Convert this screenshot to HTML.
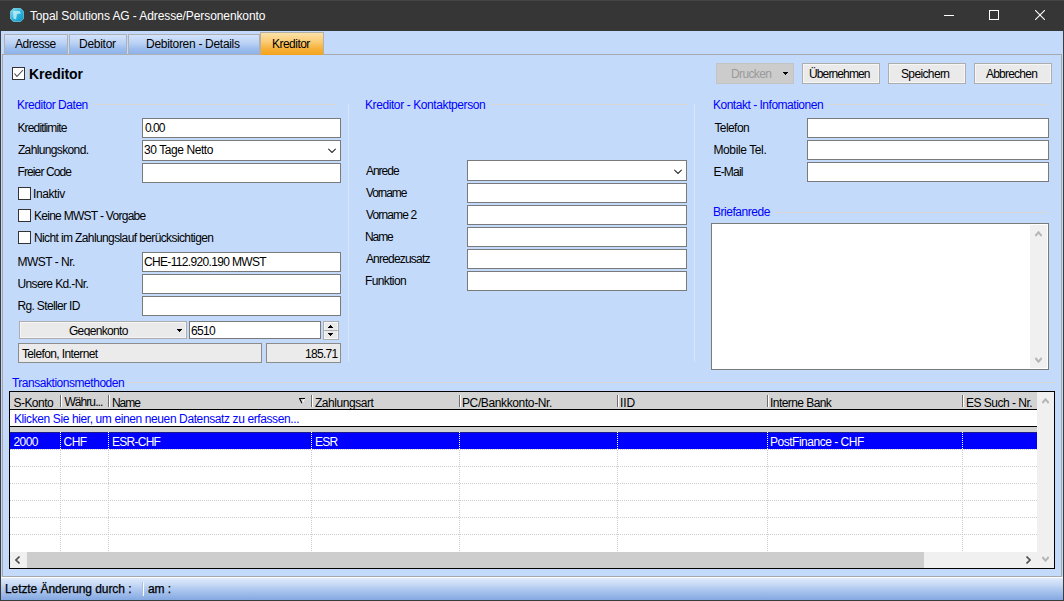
<!DOCTYPE html>
<html lang="de">
<head>
<meta charset="utf-8">
<title>Topal Solutions AG - Adresse/Personenkonto</title>
<style>
*{box-sizing:border-box;margin:0;padding:0}
html,body{width:1064px;height:601px;overflow:hidden;background:#c4dafa}
body{font-family:"Liberation Sans",sans-serif;font-size:12px;color:#000}
#win{position:absolute;left:0;top:0;width:1064px;height:601px;background:#c4dafa;overflow:hidden}
#win>div,#win>svg,#win>span{position:absolute}
.t{white-space:nowrap;display:block}
.hd{height:1px;background-image:linear-gradient(90deg,#cdcdcd 50%,transparent 50%);background-size:2px 1px}
.vd{width:1px;background-image:linear-gradient(180deg,#cdcdcd 50%,transparent 50%);background-size:1px 2px}
.vdw{width:1px;background-image:linear-gradient(180deg,#fff 50%,transparent 50%);background-size:1px 2px}
</style>
</head>
<body>
<div id="win">
<div style="left:0px;top:0px;width:1064px;height:31px;background:#363636"></div>
<div style="left:0px;top:0px;width:1064px;height:1px;background:#444"></div>
<svg style="left:10px;top:8px" width="14" height="14" viewBox="0 0 14 14"><defs><linearGradient id="ig" x1="0" y1="0" x2="1" y2="1"><stop offset="0" stop-color="#7fe0f5"/><stop offset="0.5" stop-color="#2fb4dc"/><stop offset="1" stop-color="#0b93c6"/></linearGradient></defs><path d="M3.5 0.3h7l3.2 3.2v7l-3.2 3.2h-7l-3.2-3.2v-7z" fill="url(#ig)" stroke="#8fe3f3" stroke-width="0.6"/><path d="M3 3h6.5l1.5 2.5-4 0.5-1 5.5-2.5-1z" fill="#d8f6fc" opacity="0.7"/></svg>
<svg style="left:944px;top:15px" width="10" height="1"><rect width="10" height="1" fill="#fff"/></svg>
<svg style="left:989px;top:10px" width="10" height="10"><rect x="0.5" y="0.5" width="9" height="9" fill="none" stroke="#fff" stroke-width="1"/></svg>
<svg style="left:1035px;top:10px" width="10" height="10"><path d="M0 0L10 10M10 0L0 10" stroke="#fff" stroke-width="1.1" fill="none"/></svg>
<div style="left:0px;top:31px;width:1px;height:570px;background:#3c3c3c"></div>
<div style="left:1063px;top:31px;width:1px;height:570px;background:#3c3c3c"></div>
<div style="left:0px;top:600px;width:1064px;height:1px;background:#3c3c3c"></div>
<div style="left:2px;top:54px;width:1060px;height:523px;border:1px solid #a6a8ae;background:#c4dafa"></div>
<div style="left:4px;top:34px;width:64px;height:21px;border:1px solid #aeb0b6;background:linear-gradient(#d3e3fb 0%,#bcd3f5 40%,#9fbfee 70%,#8db3ea 100%)"></div>
<div style="left:69px;top:34px;width:58px;height:21px;border:1px solid #aeb0b6;background:linear-gradient(#d3e3fb 0%,#bcd3f5 40%,#9fbfee 70%,#8db3ea 100%)"></div>
<div style="left:128px;top:34px;width:132px;height:21px;border:1px solid #aeb0b6;background:linear-gradient(#d3e3fb 0%,#bcd3f5 40%,#9fbfee 70%,#8db3ea 100%)"></div>
<div style="left:260px;top:32px;width:64px;height:23px;border:1px solid #b3b0a8;border-bottom:none;background:linear-gradient(#fbe2a8 0%,#facb74 40%,#f7b23c 70%,#f5a21a 100%)"></div>
<div style="left:12px;top:67px;width:13px;height:13px;background:#fff;border:1px solid #333"></div>
<svg style="left:12px;top:67px" width="13" height="13"><path d="M2.5 6.5L5 9.5L11 3" stroke="#444" stroke-width="1.1" fill="none"/></svg>
<div style="left:716px;top:63px;width:78px;height:21px;background:#cccccc;border:1px solid #c3c3c3"></div>
<svg style="left:783px;top:72px" width="5" height="3"><path d="M0 0h5v1h-1v1h-1v1h-1v-1h-1v-1h-1z" fill="#000"/></svg>
<div style="left:802px;top:63px;width:78px;height:21px;background:#eaeaea;border:1px solid #adadad;box-shadow:inset 0 0 0 1px #f6f6f6"></div>
<div style="left:888px;top:63px;width:78px;height:21px;background:#eaeaea;border:1px solid #adadad;box-shadow:inset 0 0 0 1px #f6f6f6"></div>
<div style="left:974px;top:63px;width:78px;height:21px;background:#eaeaea;border:1px solid #adadad;box-shadow:inset 0 0 0 1px #f6f6f6"></div>
<div style="left:94px;top:104px;width:242px;height:1px;background:#d8d7d3"></div>
<div style="left:348px;top:104px;width:1px;height:258px;background:#d9e4f4"></div>
<div style="left:142px;top:118px;width:199px;height:20px;background:#fff;border:1px solid #7a7a7a"></div>
<div style="left:142px;top:140px;width:199px;height:21px;background:#fff;border:1px solid #7a7a7a"></div>
<svg style="left:328px;top:148px" width="8" height="5"><path d="M0.3 0.8L4 4.5L7.7 0.8" stroke="#262626" stroke-width="1.1" fill="none"/></svg>
<div style="left:142px;top:163px;width:199px;height:20px;background:#fff;border:1px solid #7a7a7a"></div>
<div style="left:18px;top:187px;width:13px;height:13px;background:#fff;border:1px solid #333"></div>
<div style="left:18px;top:209px;width:13px;height:13px;background:#fff;border:1px solid #333"></div>
<div style="left:18px;top:231px;width:13px;height:13px;background:#fff;border:1px solid #333"></div>
<div style="left:142px;top:252px;width:199px;height:20px;background:#fff;border:1px solid #7a7a7a"></div>
<div style="left:142px;top:274px;width:199px;height:20px;background:#fff;border:1px solid #7a7a7a"></div>
<div style="left:142px;top:296px;width:199px;height:20px;background:#fff;border:1px solid #7a7a7a"></div>
<div style="left:19px;top:321px;width:168px;height:18px;background:#eaeaea;border:1px solid #adadad;box-shadow:inset 0 0 0 1px #f6f6f6"></div>
<div style="left:21px;top:336px;width:164px;height:1px;background:#eaeaea;z-index:2"></div>
<div style="left:20px;top:337px;width:166px;height:1px;background:#f6f6f6;z-index:2"></div>
<svg style="left:177px;top:329px" width="5" height="3"><path d="M0 0h5v1h-1v1h-1v1h-1v-1h-1v-1h-1z" fill="#000"/></svg>
<div style="left:189px;top:321px;width:132px;height:18px;background:#fff;border:1px solid #7a7a7a"></div>
<div style="left:323px;top:321px;width:16px;height:19px;background:#e9e9e9;border:1px solid #adadad;box-shadow:inset 0 0 0 1px #f6f6f6"></div>
<div style="left:324px;top:330px;width:14px;height:1px;background:#adadad"></div>
<svg style="left:328px;top:325px" width="5" height="3"><path d="M0 3h5v-1h-1v-1h-1v-1h-1v1h-1v1h-1z" fill="#000"/></svg>
<svg style="left:328px;top:333px" width="5" height="3"><path d="M0 0h5v1h-1v1h-1v1h-1v-1h-1v-1h-1z" fill="#000"/></svg>
<div style="left:18px;top:343px;width:244px;height:20px;background:#ebebeb;border:1px solid #8c8c8c"></div>
<div style="left:266px;top:343px;width:75px;height:20px;background:#ebebeb;border:1px solid #8c8c8c"></div>
<div style="left:490px;top:104px;width:198px;height:1px;background:#d8d7d3"></div>
<div style="left:694px;top:104px;width:1px;height:258px;background:#d9e4f4"></div>
<div style="left:467px;top:160px;width:220px;height:21px;background:#fff;border:1px solid #7a7a7a"></div>
<svg style="left:674px;top:169px" width="8" height="5"><path d="M0.3 0.8L4 4.5L7.7 0.8" stroke="#262626" stroke-width="1.1" fill="none"/></svg>
<div style="left:467px;top:183px;width:220px;height:20px;background:#fff;border:1px solid #7a7a7a"></div>
<div style="left:467px;top:205px;width:220px;height:20px;background:#fff;border:1px solid #7a7a7a"></div>
<div style="left:467px;top:227px;width:220px;height:20px;background:#fff;border:1px solid #7a7a7a"></div>
<div style="left:467px;top:249px;width:220px;height:20px;background:#fff;border:1px solid #7a7a7a"></div>
<div style="left:467px;top:271px;width:220px;height:20px;background:#fff;border:1px solid #7a7a7a"></div>
<div style="left:829px;top:104px;width:219px;height:1px;background:#d8d7d3"></div>
<div style="left:807px;top:118px;width:242px;height:20px;background:#fff;border:1px solid #7a7a7a"></div>
<div style="left:807px;top:140px;width:242px;height:20px;background:#fff;border:1px solid #7a7a7a"></div>
<div style="left:807px;top:162px;width:242px;height:20px;background:#fff;border:1px solid #7a7a7a"></div>
<div style="left:775px;top:212px;width:273px;height:1px;background:#d8d7d3"></div>
<div style="left:711px;top:223px;width:338px;height:147px;background:#fff;border:1px solid #7a7a7a"></div>
<div style="left:1030px;top:225px;width:17px;height:143px;background:#f0f0f0"></div>
<svg style="left:1035px;top:231px" width="7" height="6"><path d="M0.3 5L3.5 1.3L6.7 5" stroke="#b6b6b6" stroke-width="2" fill="none"/></svg>
<svg style="left:1035px;top:357px" width="7" height="6"><path d="M0.3 1L3.5 4.7L6.7 1" stroke="#b6b6b6" stroke-width="2" fill="none"/></svg>
<div style="left:127px;top:382px;width:928px;height:1px;background:#d8d7d3"></div>
<div style="left:9px;top:391px;width:1046px;height:178px;border:1px solid #000;background:#fff"></div>
<div style="left:10px;top:392px;width:1027px;height:17px;background:#d3d3d3"></div>
<div style="left:60px;top:395px;width:1px;height:12px;background:#6e6e6e"></div>
<div style="left:61px;top:395px;width:1px;height:12px;background:#fff"></div>
<div style="left:108px;top:395px;width:1px;height:12px;background:#6e6e6e"></div>
<div style="left:109px;top:395px;width:1px;height:12px;background:#fff"></div>
<div style="left:311px;top:395px;width:1px;height:12px;background:#6e6e6e"></div>
<div style="left:312px;top:395px;width:1px;height:12px;background:#fff"></div>
<div style="left:459px;top:395px;width:1px;height:12px;background:#6e6e6e"></div>
<div style="left:460px;top:395px;width:1px;height:12px;background:#fff"></div>
<div style="left:617px;top:395px;width:1px;height:12px;background:#6e6e6e"></div>
<div style="left:618px;top:395px;width:1px;height:12px;background:#fff"></div>
<div style="left:767px;top:395px;width:1px;height:12px;background:#6e6e6e"></div>
<div style="left:768px;top:395px;width:1px;height:12px;background:#fff"></div>
<div style="left:962px;top:395px;width:1px;height:12px;background:#6e6e6e"></div>
<div style="left:963px;top:395px;width:1px;height:12px;background:#fff"></div>
<svg style="left:299px;top:398px" width="6" height="6"><path d="M5.6 0.8L3.2 5.4" stroke="#fff" stroke-width="1" fill="none"/><path d="M0 0.5h6M0.7 0.8L3 5.2" stroke="#000" stroke-width="1.1" fill="none"/></svg>
<div style="left:10px;top:409px;width:1027px;height:1px;background:#000"></div>
<div style="left:10px;top:426px;width:1027px;height:1px;background:#000"></div>
<div style="left:10px;top:427px;width:1027px;height:5px;background:#d3d3d3"></div>
<div style="left:10px;top:432px;width:1027px;height:17px;background:#0000ff"></div>
<div style="left:10px;top:432px;width:1027px;height:1px;background:#1c1c8c"></div>
<div class="hd" style="left:10px;top:449px;width:1027px"></div>
<div class="hd" style="left:10px;top:466px;width:1027px"></div>
<div class="hd" style="left:10px;top:483px;width:1027px"></div>
<div class="hd" style="left:10px;top:500px;width:1027px"></div>
<div class="hd" style="left:10px;top:517px;width:1027px"></div>
<div class="hd" style="left:10px;top:534px;width:1027px"></div>
<div class="vd" style="left:60px;top:450px;height:102px"></div>
<div class="vdw" style="left:60px;top:432px;height:17px"></div>
<div class="vd" style="left:108px;top:450px;height:102px"></div>
<div class="vdw" style="left:108px;top:432px;height:17px"></div>
<div class="vd" style="left:311px;top:450px;height:102px"></div>
<div class="vdw" style="left:311px;top:432px;height:17px"></div>
<div class="vd" style="left:459px;top:450px;height:102px"></div>
<div class="vdw" style="left:459px;top:432px;height:17px"></div>
<div class="vd" style="left:617px;top:450px;height:102px"></div>
<div class="vdw" style="left:617px;top:432px;height:17px"></div>
<div class="vd" style="left:767px;top:450px;height:102px"></div>
<div class="vdw" style="left:767px;top:432px;height:17px"></div>
<div class="vd" style="left:962px;top:450px;height:102px"></div>
<div class="vdw" style="left:962px;top:432px;height:17px"></div>
<div style="left:10px;top:552px;width:1027px;height:16px;background:#f0f0f0"></div>
<div style="left:27px;top:552px;width:897px;height:16px;background:#cdcdcd"></div>
<svg style="left:15px;top:556px" width="5" height="8"><path d="M4.5 0.5L1 4L4.5 7.5" stroke="#505050" stroke-width="1.6" fill="none"/></svg>
<svg style="left:1026px;top:556px" width="5" height="8"><path d="M0.5 0.5L4 4L0.5 7.5" stroke="#505050" stroke-width="1.6" fill="none"/></svg>
<div style="left:1037px;top:392px;width:17px;height:176px;background:#f0f0f0"></div>
<svg style="left:1042px;top:398px" width="7" height="6"><path d="M0.3 5L3.5 1.3L6.7 5" stroke="#b6b6b6" stroke-width="2" fill="none"/></svg>
<svg style="left:1042px;top:556px" width="7" height="6"><path d="M0.3 1L3.5 4.7L6.7 1" stroke="#b6b6b6" stroke-width="2" fill="none"/></svg>
<div style="left:1px;top:577px;width:1062px;height:23px;background:linear-gradient(#fdfeff 0%,#fdfeff 4.3%,#dfeafb 4.4%,#c9dbf6 30%,#adc7ef 56%,#84a8e1 100%)"></div>
<div style="left:142px;top:582px;width:1px;height:14px;background:#a9bfe2"></div>
<div style="left:143px;top:582px;width:1px;height:14px;background:#f6f9fe"></div>
<span id="ti" class="t" style="left:29.90px;top:9px;font-size:12px;line-height:14px;letter-spacing:-0.096px;color:#fff">Topal Solutions AG - Adresse/Personenkonto</span>
<span id="s1" class="t" style="left:4.95px;top:582px;font-size:12px;line-height:14px;letter-spacing:-0.070px;-webkit-text-stroke:0.25px #000">Letzte Änderung durch :</span>
<span id="s2" class="t" style="left:147.95px;top:582px;font-size:12px;line-height:14px;letter-spacing:-0.050px;-webkit-text-stroke:0.25px #000">am :</span>
<span id="tb1" class="t" style="left:14.92px;top:37px;font-size:12px;line-height:14px;letter-spacing:-0.440px;">Adresse</span>
<span id="tb2" class="t" style="left:79.02px;top:37px;font-size:12px;line-height:14px;letter-spacing:-0.275px;">Debitor</span>
<span id="tb3" class="t" style="left:146.02px;top:37px;font-size:12px;line-height:14px;letter-spacing:-0.300px;">Debitoren - Details</span>
<span id="tb4" class="t" style="left:271.94px;top:37px;font-size:12px;line-height:14px;letter-spacing:-0.513px;">Kreditor</span>
<span id="hk" class="t" style="left:28.95px;top:66px;font-size:14px;line-height:16px;letter-spacing:-0.050px;font-weight:bold">Kreditor</span>
<span id="b1" class="t" style="left:730.95px;top:67px;font-size:12px;line-height:14px;letter-spacing:-0.605px;color:#9a9a9a">Drucken</span>
<span id="b2" class="t" style="left:809.02px;top:67px;font-size:12px;line-height:14px;letter-spacing:-0.880px;">Übernehmen</span>
<span id="b3" class="t" style="left:901.00px;top:67px;font-size:12px;line-height:14px;letter-spacing:-0.635px;">Speichern</span>
<span id="b4" class="t" style="left:985.90px;top:67px;font-size:12px;line-height:14px;letter-spacing:-0.759px;">Abbrechen</span>
<span id="g1" class="t" style="left:16.95px;top:98px;font-size:12px;line-height:14px;letter-spacing:-0.465px;color:#0000ff">Kreditor Daten</span>
<span id="l1" class="t" style="left:17.48px;top:121px;font-size:12px;line-height:14px;letter-spacing:-0.848px;">Kreditlimite</span>
<span id="l2" class="t" style="left:17.90px;top:143px;font-size:12px;line-height:14px;letter-spacing:-0.631px;">Zahlungskond.</span>
<span id="l3" class="t" style="left:17.48px;top:165px;font-size:12px;line-height:14px;letter-spacing:-0.882px;">Freier Code</span>
<span id="v1" class="t" style="left:144.90px;top:121px;font-size:12px;line-height:14px;letter-spacing:-0.950px;">0.00</span>
<span id="v2" class="t" style="left:144.00px;top:143px;font-size:12px;line-height:14px;letter-spacing:-0.425px;">30 Tage Netto</span>
<span id="c1" class="t" style="left:33.05px;top:187px;font-size:12px;line-height:14px;letter-spacing:-0.425px;">Inaktiv</span>
<span id="c2" class="t" style="left:33.95px;top:209px;font-size:12px;line-height:14px;letter-spacing:-0.713px;">Keine MWST - Vorgabe</span>
<span id="c3" class="t" style="left:33.95px;top:231px;font-size:12px;line-height:14px;letter-spacing:-0.613px;">Nicht im Zahlungslauf berücksichtigen</span>
<span id="l4" class="t" style="left:17.48px;top:255px;font-size:12px;line-height:14px;letter-spacing:-0.500px;">MWST - Nr.</span>
<span id="l5" class="t" style="left:17.48px;top:277px;font-size:12px;line-height:14px;letter-spacing:-0.621px;">Unsere Kd.-Nr.</span>
<span id="l6" class="t" style="left:17.48px;top:299px;font-size:12px;line-height:14px;letter-spacing:-0.656px;">Rg. Steller ID</span>
<span id="v3" class="t" style="left:143.98px;top:255px;font-size:12px;line-height:14px;letter-spacing:-0.661px;">CHE-112.920.190 MWST</span>
<span id="gk" class="t" style="left:68.95px;top:324px;font-size:12px;line-height:14px;letter-spacing:-0.650px;">Gegenkonto</span>
<span id="v4" class="t" style="left:191.00px;top:324px;font-size:12px;line-height:14px;letter-spacing:-0.650px;">6510</span>
<span id="v5" class="t" style="left:21.90px;top:347px;font-size:12px;line-height:14px;letter-spacing:-0.613px;">Telefon, Internet</span>
<span id="v6" class="t" style="left:304.95px;top:347px;font-size:12px;line-height:14px;letter-spacing:-0.680px;">185.71</span>
<span id="g2" class="t" style="left:364.95px;top:98px;font-size:12px;line-height:14px;letter-spacing:-0.402px;color:#0000ff">Kreditor - Kontaktperson</span>
<span id="m1" class="t" style="left:365.90px;top:164px;font-size:12px;line-height:14px;letter-spacing:-0.995px;">Anrede</span>
<span id="m2" class="t" style="left:365.90px;top:186px;font-size:12px;line-height:14px;letter-spacing:-1.100px;">Vorname</span>
<span id="m3" class="t" style="left:365.90px;top:208px;font-size:12px;line-height:14px;letter-spacing:-0.838px;">Vorname 2</span>
<span id="m4" class="t" style="left:365.00px;top:230px;font-size:12px;line-height:14px;letter-spacing:-1.100px;">Name</span>
<span id="m5" class="t" style="left:365.90px;top:252px;font-size:12px;line-height:14px;letter-spacing:-0.803px;">Anredezusatz</span>
<span id="m6" class="t" style="left:365.00px;top:274px;font-size:12px;line-height:14px;letter-spacing:-0.629px;">Funktion</span>
<span id="g3" class="t" style="left:712.95px;top:98px;font-size:12px;line-height:14px;letter-spacing:-0.479px;color:#0000ff">Kontakt - Infomationen</span>
<span id="r1" class="t" style="left:714.38px;top:121px;font-size:12px;line-height:14px;letter-spacing:-0.567px;">Telefon</span>
<span id="r2" class="t" style="left:713.48px;top:143px;font-size:12px;line-height:14px;letter-spacing:-0.388px;">Mobile Tel.</span>
<span id="r3" class="t" style="left:713.48px;top:165px;font-size:12px;line-height:14px;letter-spacing:-0.815px;">E-Mail</span>
<span id="g4" class="t" style="left:712.95px;top:205px;font-size:12px;line-height:14px;letter-spacing:-0.455px;color:#0000ff">Briefanrede</span>
<span id="g5" class="t" style="left:11.90px;top:376px;font-size:12px;line-height:14px;letter-spacing:-0.464px;color:#0000ff">Transaktionsmethoden</span>
<span id="h1" class="t" style="left:13.47px;top:396px;font-size:12px;line-height:14px;letter-spacing:-0.537px;">S-Konto</span>
<span id="h2" class="t" style="left:64.38px;top:395px;font-size:12px;line-height:14px;letter-spacing:-0.918px;">Währu...</span>
<span id="h3" class="t" style="left:111.95px;top:396px;font-size:12px;line-height:14px;letter-spacing:-1.025px;">Name</span>
<span id="h4" class="t" style="left:314.90px;top:396px;font-size:12px;line-height:14px;letter-spacing:-0.432px;">Zahlungsart</span>
<span id="h5" class="t" style="left:462.00px;top:396px;font-size:12px;line-height:14px;letter-spacing:-0.380px;">PC/Bankkonto-Nr.</span>
<span id="h6" class="t" style="left:620.03px;top:396px;font-size:12px;line-height:14px;letter-spacing:-0.050px;">IID</span>
<span id="h7" class="t" style="left:770.02px;top:396px;font-size:12px;line-height:14px;letter-spacing:-0.565px;">Interne Bank</span>
<span id="h8" class="t" style="left:965.96px;top:396px;font-size:12px;line-height:14px;letter-spacing:-0.500px;">ES Such - Nr.</span>
<span id="ar" class="t" style="left:13.95px;top:412px;font-size:12px;line-height:14px;letter-spacing:-0.392px;color:#0000ff">Klicken Sie hier, um einen neuen Datensatz zu erfassen...</span>
<span id="d1" class="t" style="left:13.47px;top:435px;font-size:12px;line-height:14px;letter-spacing:-0.575px;color:#fff">2000</span>
<span id="d2" class="t" style="left:63.48px;top:435px;font-size:12px;line-height:14px;letter-spacing:-0.500px;color:#fff">CHF</span>
<span id="d3" class="t" style="left:111.95px;top:435px;font-size:12px;line-height:14px;letter-spacing:-0.725px;color:#fff">ESR-CHF</span>
<span id="d4" class="t" style="left:314.95px;top:435px;font-size:12px;line-height:14px;letter-spacing:-0.725px;color:#fff">ESR</span>
<span id="d5" class="t" style="left:770.02px;top:435px;font-size:12px;line-height:14px;letter-spacing:-0.489px;color:#fff">PostFinance - CHF</span>
</div>
</body>
</html>
